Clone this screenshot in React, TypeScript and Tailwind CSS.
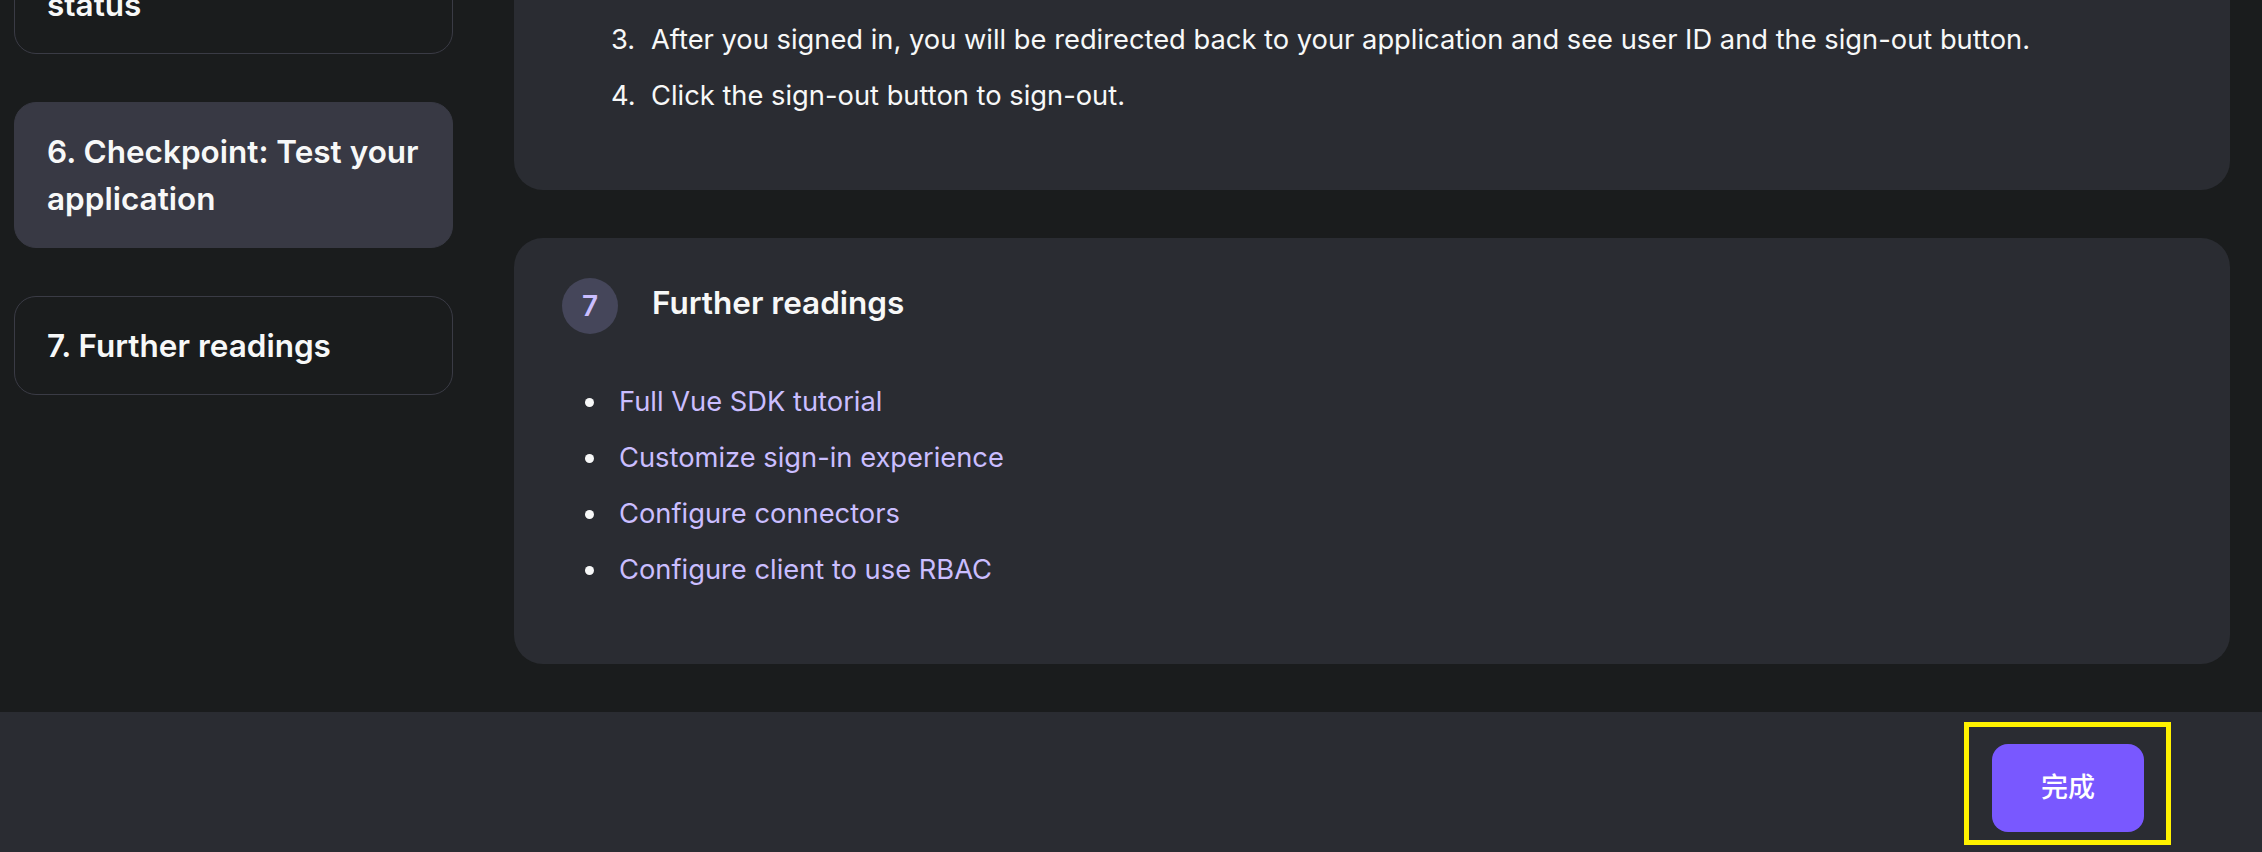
const steps = [
  { id: 5, lines: ["5. Handle authentication", "status"] },
  { id: 6, lines: ["6. Checkpoint: Test your", "application"] },
  { id: 7, lines: ["7. Further readings"] },
];

const readings = [
  "Full Vue SDK tutorial",
  "Customize sign-in experience",
  "Configure connectors",
  "Configure client to use RBAC",
];

function SideItem({ lines, active }: { lines: string[]; active?: boolean }) {
  return (
    <div
      className={
        active
          ? "rounded-[22px] border-[1.5px] border-[#383944] bg-[#383944] px-[32px] py-[25px]"
          : "rounded-[22px] border-[1.5px] border-[#3a3b45] px-[32px] py-[25px]"
      }
    >
      <p className="text-[31.5px] font-semibold leading-[47px] text-[#f7f8f8]">
        {lines.map((l) => (
          <span key={l} className="block whitespace-nowrap">
            {l}
          </span>
        ))}
      </p>
    </div>
  );
}

export default function App() {
  return (
    <div
      className="flex h-[852px] flex-col overflow-hidden bg-[#1a1c1d]"
      style={{ fontFamily: "Inter, 'Noto Sans CJK SC', sans-serif" }}
    >
      <div className="flex h-[712px] shrink-0 gap-[61px] overflow-hidden pl-[14px] pr-[32px]">
        <aside className="-mt-[92px] flex w-[439px] shrink-0 flex-col gap-[48px]">
          {steps.map((s) => (
            <SideItem key={s.id} lines={s.lines} active={s.id === 6} />
          ))}
        </aside>

        <main className="flex min-w-0 flex-1 flex-col gap-[48px]">
          <section className="-mt-[40px] rounded-[29px] bg-[#2a2c32] pb-[66px] pl-[97px] pr-[48px] pt-[52px]">
            <ol className="text-[27.3px] leading-[56px] text-[#f7f8f8]">
              <li className="flex">
                <span className="w-[40px] shrink-0">3.</span>
                <span>
                  After you signed in, you will be redirected back to your application and see user ID and the
                  sign-out button.
                </span>
              </li>
              <li className="flex">
                <span className="w-[40px] shrink-0">4.</span>
                <span>Click the sign-out button to sign-out.</span>
              </li>
            </ol>
          </section>

          <section className="rounded-[29px] bg-[#2a2c32] pb-[66px] pl-[48px] pr-[48px] pt-[40px]">
            <div className="flex items-center gap-[34px]">
              <div className="flex h-[56px] w-[56px] items-center justify-center rounded-full bg-[#45465a] text-[28px] font-semibold text-[#cabeff]">
                7
              </div>
              <h3 className="pb-[6px] text-[31.5px] font-semibold text-[#f7f8f8]">Further readings</h3>
            </div>
            <ul className="mt-[40px] pl-[23px] text-[27.3px] leading-[56px]">
              {readings.map((r) => (
                <li key={r} className="flex items-center gap-[25px]">
                  <span className="h-[9px] w-[9px] shrink-0 rounded-full bg-[#f7f8f8]" />
                  <a className="text-[#cabeff]" href="#">
                    {r}
                  </a>
                </li>
              ))}
            </ul>
          </section>
        </main>
      </div>

      <footer className="flex flex-1 justify-end bg-[#2a2c32] pr-[118px] pt-[32px]">
        <div className="relative h-[88px]">
          <button className="h-[88px] w-[152px] rounded-[16px] bg-[#7958ff] text-[27px] font-medium text-white">
            完成
          </button>
          <div className="pointer-events-none absolute -bottom-[13px] -left-[28px] -right-[27px] -top-[22px] border-[5px] border-[#fff200]" />
        </div>
      </footer>
    </div>
  );
}
